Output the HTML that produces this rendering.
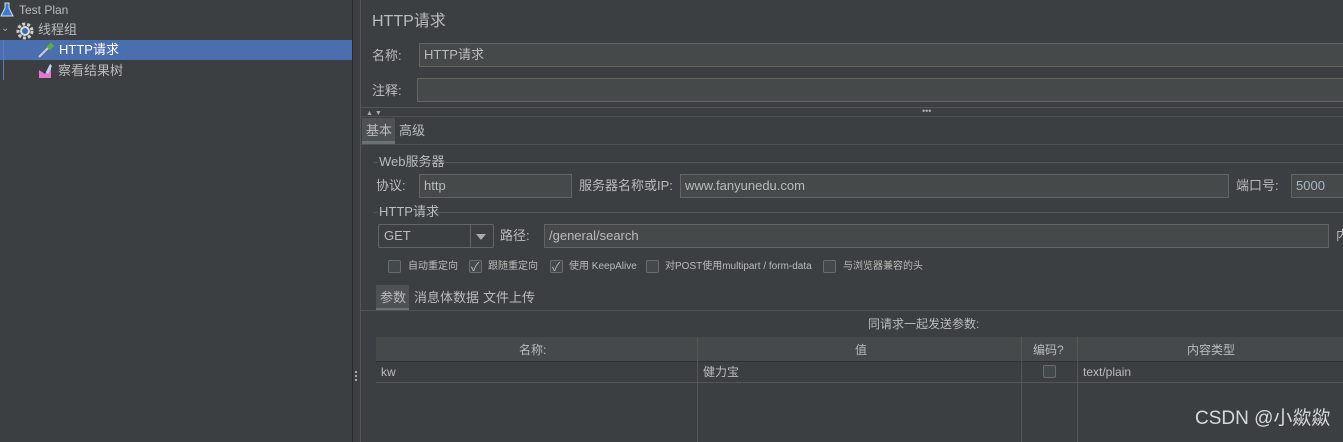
<!DOCTYPE html>
<html><head><meta charset="utf-8"><style>
*{margin:0;padding:0;box-sizing:border-box}
body{width:1343px;height:442px;background:#3c3f41;overflow:hidden;position:relative;font-family:"Liberation Sans","Noto Sans CJK SC",sans-serif;font-size:12px;color:#bbbbbb}
.a{position:absolute;white-space:nowrap;line-height:15px}
.in{position:absolute;background:#45494a;border:1px solid #646464;color:#bbbbbb;padding-left:4px;line-height:22px;font-size:13px}
.hl{position:absolute;height:1px;background:#555759}
.cb{position:absolute;width:13px;height:13px;border:1px solid #6b6b6b;border-radius:2px;background:#43494a}
.ck::after{content:"✓";position:absolute;left:1px;top:-3px;font-size:12px;color:#bbb}
.s{font-size:10px}
</style></head><body>
<div class="a" style="left:0;top:40px;width:352px;height:20px;background:#4b6eaf"></div>
<div class="a" style="left:3px;top:40px;width:1px;height:40px;background:#5a7fb8"></div>
<svg class="a" style="left:0;top:2px" width="14" height="16"><path d="M5 1h4v5l4 8H1l4-8z" fill="#3a7bd5" stroke="#ddd" stroke-width="1"/></svg>
<div class="a" style="left:19px;top:3px">Test Plan</div>
<div class="a" style="left:1px;top:21px;font-size:10px;color:#aaa">⌄</div>
<svg class="a" style="left:16px;top:22px" width="18" height="18"><circle cx="9" cy="9" r="7" fill="none" stroke="#cfcfcf" stroke-width="3" stroke-dasharray="3 2"/><circle cx="9" cy="9" r="5" fill="#ddd"/><circle cx="9" cy="9" r="3" fill="#3a6fb5"/></svg>
<div class="a" style="left:38px;top:22px;font-size:13px">线程组</div>
<svg class="a" style="left:37px;top:41px" width="18" height="18"><path d="M2 16L12 6" stroke="#ccc" stroke-width="2"/><rect x="11" y="2" width="5" height="6" fill="#5cad3a" transform="rotate(45 13 5)"/></svg>
<div class="a" style="left:59px;top:42px;font-size:13px;color:#fff">HTTP请求</div>
<svg class="a" style="left:37px;top:62px" width="18" height="18"><path d="M2 16V8l6 4 6-10v14z" fill="#e47ad0"/><path d="M9 10l4-8 2 2-4 8z" fill="#bcd5f0"/></svg>
<div class="a" style="left:58px;top:63px;font-size:13px">察看结果树</div>
<div class="a" style="left:352px;top:0;width:1px;height:442px;background:#2b2b2b"></div>
<div class="a" style="left:360px;top:0;width:1px;height:442px;background:#555"></div>
<div class="a" style="left:355px;top:371px;width:2px;height:2px;background:#aaa;box-shadow:0 4px #aaa,0 8px #aaa"></div>
<div class="a" style="left:372px;top:13px;font-size:16px;line-height:18px">HTTP请求</div>
<div class="a" style="left:372px;top:48px;font-size:13px">名称:</div>
<div class="in" style="left:419px;top:43px;width:930px;height:24px">HTTP请求</div>
<div class="a" style="left:372px;top:83px;font-size:13px">注释:</div>
<div class="in" style="left:417px;top:78px;width:930px;height:24px"></div>
<div class="hl" style="left:361px;top:107px;width:982px;background:#555"></div>
<div class="a" style="left:366px;top:106px;font-size:7px;color:#aaa">▲ ▼</div>
<div class="a" style="left:922px;top:104px;font-size:9px;color:#aaa">•••</div>
<div class="hl" style="left:361px;top:116px;width:982px;background:#505050"></div>
<div class="a" style="left:362px;top:118px;width:33px;height:26px;background:#4e5254;border-bottom:3px solid #6b7073"></div>
<div class="a" style="left:366px;top:123px;font-size:13px">基本</div>
<div class="a" style="left:399px;top:123px;font-size:13px">高级</div>
<div class="hl" style="left:361px;top:144px;width:982px;background:#505254"></div>
<div class="hl" style="left:374px;top:162px;width:4px"></div>
<div class="hl" style="left:442px;top:162px;width:901px"></div>
<div class="a" style="left:379px;top:154px;font-size:13px">Web服务器</div>
<div class="a" style="left:376px;top:178px;font-size:13px">协议:</div>
<div class="in" style="left:419px;top:174px;width:153px;height:24px">http</div>
<div class="a" style="left:579px;top:178px;font-size:13px">服务器名称或IP:</div>
<div class="in" style="left:680px;top:174px;width:549px;height:24px">www.fanyunedu.com</div>
<div class="a" style="left:1236px;top:178px;font-size:13px">端口号:</div>
<div class="in" style="left:1291px;top:174px;width:60px;height:24px;color:#a9b7c6">5000</div>
<div class="hl" style="left:374px;top:212px;width:4px"></div>
<div class="hl" style="left:433px;top:212px;width:910px"></div>
<div class="a" style="left:379px;top:204px;font-size:13px">HTTP请求</div>
<div class="in" style="left:378px;top:224px;width:116px;height:24px;background:#3c3f41;border-radius:2px;padding-left:5px">GET</div>
<div class="a" style="left:470px;top:225px;width:1px;height:22px;background:#646464"></div>
<div class="a" style="left:476px;top:234px;width:0;height:0;border-left:5px solid transparent;border-right:5px solid transparent;border-top:6px solid #aaa"></div>
<div class="a" style="left:500px;top:228px;font-size:13px">路径:</div>
<div class="in" style="left:544px;top:224px;width:785px;height:24px">/general/search</div>
<div class="a" style="left:1336px;top:228px;font-size:13px">内</div>
<div class="cb" style="left:388px;top:260px"></div><div class="a s" style="left:408px;top:259px">自动重定向</div>
<div class="cb ck" style="left:469px;top:260px"></div><div class="a s" style="left:488px;top:259px">跟随重定向</div>
<div class="cb ck" style="left:550px;top:260px"></div><div class="a s" style="left:569px;top:259px">使用 KeepAlive</div>
<div class="cb" style="left:646px;top:260px"></div><div class="a s" style="left:665px;top:259px">对POST使用multipart / form-data</div>
<div class="cb" style="left:823px;top:260px"></div><div class="a s" style="left:843px;top:259px">与浏览器兼容的头</div>
<div class="a" style="left:376px;top:285px;width:33px;height:26px;background:#4e5254;border-bottom:3px solid #6b7073"></div>
<div class="a" style="left:380px;top:290px;font-size:13px">参数</div>
<div class="a" style="left:414px;top:290px;font-size:13px">消息体数据</div>
<div class="a" style="left:483px;top:290px;font-size:13px">文件上传</div>
<div class="hl" style="left:361px;top:310px;width:982px;background:#505254"></div>
<div class="a" style="left:868px;top:317px">同请求一起发送参数:</div>
<div class="a" style="left:376px;top:337px;width:967px;height:25px;background:#45494a;border-bottom:1px solid #2f3133"></div>
<div class="a" style="left:376px;top:382px;width:967px;height:1px;background:#555"></div>
<div class="a" style="left:697px;top:337px;width:1px;height:105px;background:#555"></div>
<div class="a" style="left:1021px;top:337px;width:1px;height:105px;background:#555"></div>
<div class="a" style="left:1077px;top:337px;width:1px;height:105px;background:#555"></div>
<div class="a" style="left:519px;top:343px">名称:</div>
<div class="a" style="left:855px;top:343px">值</div>
<div class="a" style="left:1033px;top:343px">编码?</div>
<div class="a" style="left:1187px;top:343px">内容类型</div>
<div class="a" style="left:381px;top:365px">kw</div>
<div class="a" style="left:703px;top:365px">健力宝</div>
<div class="cb" style="left:1043px;top:365px"></div>
<div class="a" style="left:1083px;top:365px">text/plain</div>
<div class="a" style="left:1195px;top:408px;font-size:19px;line-height:22px;color:#d8d8d8">CSDN @小歘歘</div>
</body></html>
